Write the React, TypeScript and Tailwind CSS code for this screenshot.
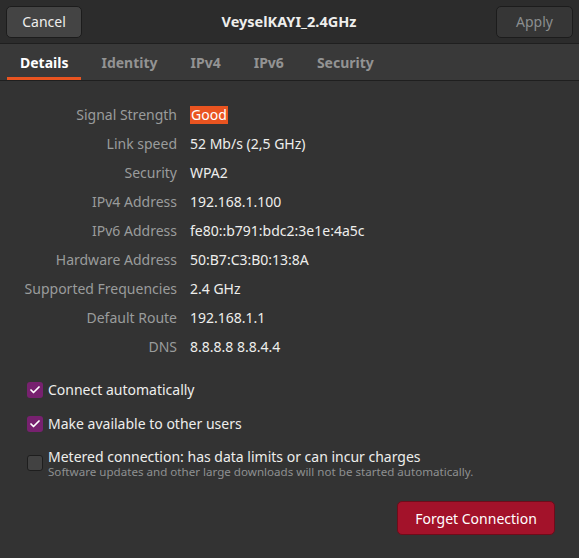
import { Check } from "lucide-react";

const details = [
  { label: "Signal Strength", value: "Good", highlight: true },
  { label: "Link speed", value: "52 Mb/s (2,5 GHz)" },
  { label: "Security", value: "WPA2" },
  { label: "IPv4 Address", value: "192.168.1.100" },
  { label: "IPv6 Address", value: "fe80::b791:bdc2:3e1e:4a5c" },
  { label: "Hardware Address", value: "50:B7:C3:B0:13:8A" },
  { label: "Supported Frequencies", value: "2.4 GHz" },
  { label: "Default Route", value: "192.168.1.1" },
  { label: "DNS", value: "8.8.8.8 8.8.4.4" },
];

const tabs = ["Details", "Identity", "IPv4", "IPv6", "Security"];

function Checkbox({ checked }: { checked: boolean }) {
  return (
    <span
      className={
        checked
          ? "flex h-4 w-4 shrink-0 items-center justify-center rounded-[3px] bg-[#77216f]"
          : "flex h-4 w-4 shrink-0 rounded-[3px] border border-[#1e1e1e] bg-[#424242]"
      }
    >
      {checked && <Check size={12} strokeWidth={3.5} className="text-white" />}
    </span>
  );
}

export default function App() {
  return (
    <div className="flex h-[558px] w-[579px] flex-col bg-[#333333] font-['Noto_Sans',sans-serif] text-[14px] text-[#eeeeec]">
      <header className="flex h-[44px] items-center justify-between border-b border-[#1f1f1f] bg-[#2c2c2c] px-[6px]">
        <button className="h-[32px] w-[76px] rounded-[5px] border border-[#1c1c1c] bg-[#444444] text-[#eeeeec]">
          Cancel
        </button>
        <h1 className="text-[14.5px] font-bold">VeyselKAYI_2.4GHz</h1>
        <button className="h-[32px] w-[77px] rounded-[5px] border border-[#1c1c1c] bg-[#363636] text-[#8b8e8f]">
          Apply
        </button>
      </header>

      <nav className="flex h-[37px] items-stretch gap-[7px] border-b border-[#1f1f1f] bg-[#393939] px-[7px]">
        {tabs.map((tab, i) => (
          <div
            key={tab}
            className={
              i === 0
                ? "flex items-center border-b-[3px] border-[#e95420] px-[13px] pt-[3px] font-bold text-white"
                : "flex items-center px-[13px] font-bold text-[#939393]"
            }
          >
            {tab}
          </div>
        ))}
      </nav>

      <section className="mt-[19px] grid grid-cols-[177px_1fr] gap-x-[13px]">
        {details.map((row) => (
          <div key={row.label} className="contents">
            <div className="flex h-[29px] items-center justify-end text-[#9a9c9c]">{row.label}</div>
            <div className="flex h-[29px] items-center">
              {row.highlight ? (
                <span className="bg-[#e95420] px-[1px] leading-[18px] text-white">{row.value}</span>
              ) : (
                row.value
              )}
            </div>
          </div>
        ))}
      </section>

      <section className="mt-[19px] flex flex-col gap-[14px] pl-[27px] leading-[20px]">
        <label className="flex items-center gap-[5px]">
          <Checkbox checked />
          <span>Connect automatically</span>
        </label>
        <label className="flex items-center gap-[5px]">
          <Checkbox checked />
          <span>Make available to other users</span>
        </label>
        <label className="flex items-start gap-[5px]">
          <span className="mt-[7px]">
            <Checkbox checked={false} />
          </span>
          <span className="flex flex-col">
            <span className="leading-[17px]">Metered connection: has data limits or can incur charges</span>
            <span className="text-[11.6px] leading-[14px] text-[#8e9091]">
              Software updates and other large downloads will not be started automatically.
            </span>
          </span>
        </label>
      </section>

      <div className="mt-[22px] flex justify-end pr-[24px]">
        <button className="h-[34px] w-[158px] rounded-[5px] border border-[#6e0c1a] bg-[#a3122a] text-white">
          Forget Connection
        </button>
      </div>
    </div>
  );
}
